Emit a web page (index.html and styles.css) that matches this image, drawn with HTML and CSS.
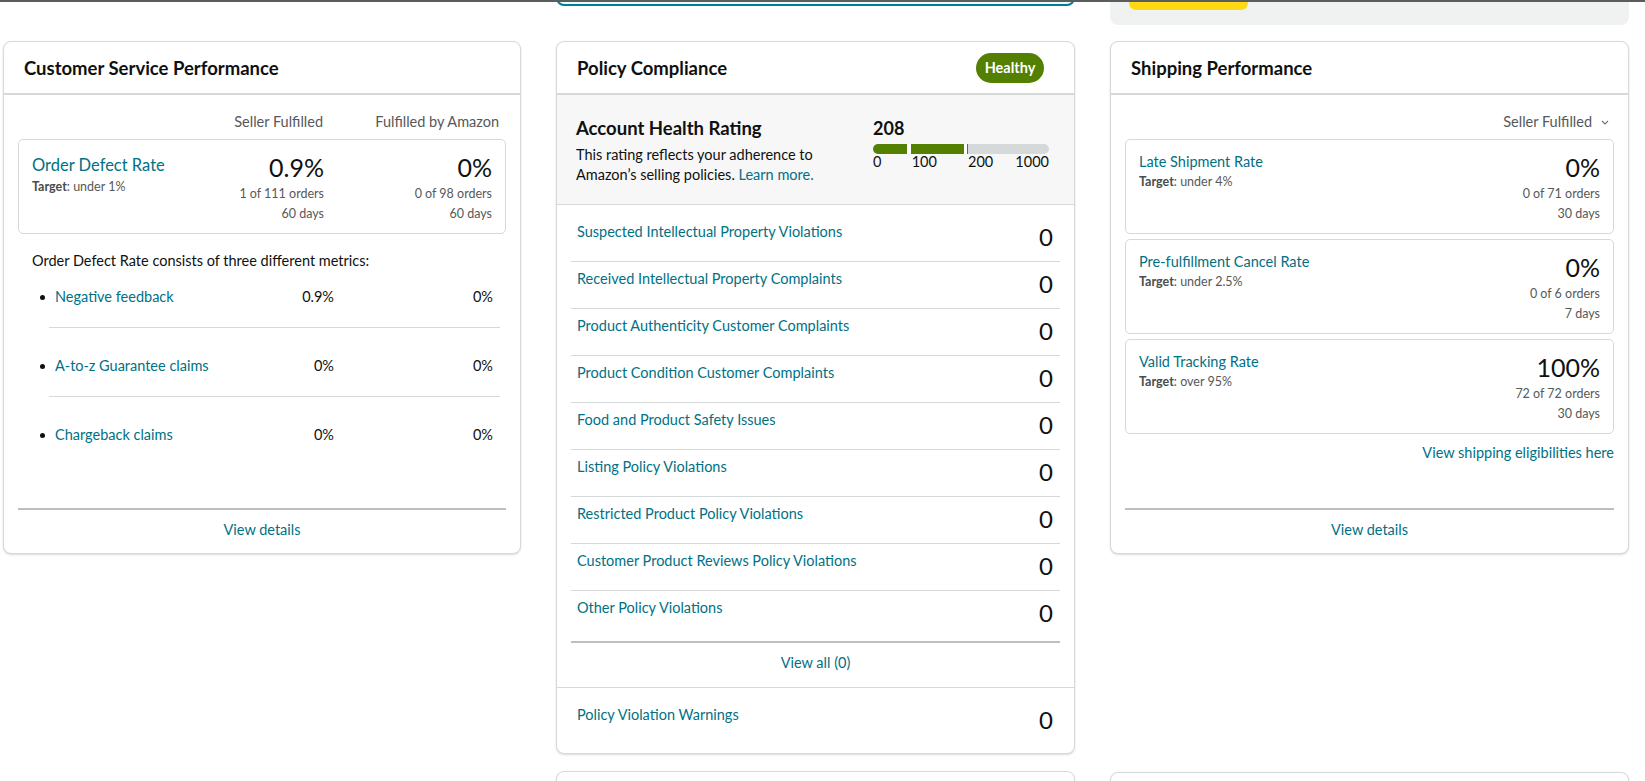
FILE: index.html
```html
<!DOCTYPE html>
<html lang="en">
<head>
<meta charset="utf-8">
<title>Account Health</title>
<link rel="stylesheet" href="styles.css">
</head>
<body>
<div class="strip">
  <div></div>
  <div class="teal-clip"><div class="teal-box"></div></div>
  <div class="gray-box"><div class="yellow-btn"></div></div>
</div>

<div class="grid">
  <!-- Customer Service Performance -->
  <section class="card">
    <div class="card-head"><h2 class="card-title">Customer Service Performance</h2></div>
    <div class="card-body">
      <div class="col-heads">
        <span class="col-head">Seller Fulfilled</span>
        <span class="col-head">Fulfilled by Amazon</span>
      </div>
      <div class="metric-box odr-box">
        <div class="mb-left">
          <a class="link mb-label big">Order Defect Rate</a>
          <div class="target"><b>Target</b>: under 1%</div>
        </div>
        <div class="mb-right">
          <div class="mb-value">0.9%</div>
          <div class="mb-sub first">1 of 111 orders</div>
          <div class="mb-sub">60 days</div>
        </div>
        <div class="mb-right">
          <div class="mb-value">0%</div>
          <div class="mb-sub first">0 of 98 orders</div>
          <div class="mb-sub">60 days</div>
        </div>
      </div>
      <p class="odr-desc">Order Defect Rate consists of three different metrics:</p>
      <div class="metrics">
        <div class="m-row"><span class="dot"></span><a class="link">Negative feedback</a><span class="m-val">0.9%</span><span class="m-val">0%</span></div>
        <div class="m-sep"></div>
        <div class="m-row"><span class="dot"></span><a class="link">A-to-z Guarantee claims</a><span class="m-val">0%</span><span class="m-val">0%</span></div>
        <div class="m-sep"></div>
        <div class="m-row"><span class="dot"></span><a class="link">Chargeback claims</a><span class="m-val">0%</span><span class="m-val">0%</span></div>
      </div>
      <div class="card-foot csp-foot"><a class="link">View details</a></div>
    </div>
  </section>

  <!-- Policy Compliance -->
  <section class="card">
    <div class="card-head"><h2 class="card-title">Policy Compliance</h2><span class="badge">Healthy</span></div>
    <div class="health">
      <div class="health-text">
        <div class="health-title">Account Health Rating</div>
        <div class="health-desc">This rating reflects your adherence to<br>Amazon’s selling policies. <a class="link">Learn more.</a></div>
      </div>
      <div class="score">
        <div class="score-num">208</div>
        <div class="bar">
          <span class="seg seg-a"></span>
          <span class="bar-gap g1"></span>
          <span class="seg seg-b"></span>
          <span class="bar-gap g2"></span>
          <span class="seg seg-mark"></span>
          <span class="seg seg-rest"></span>
        </div>
        <div class="bar-labels"><span>0</span><span>100</span><span>200</span><span>1000</span></div>
      </div>
    </div>
    <div class="pc-list">
      <div class="pc-row"><a class="link">Suspected Intellectual Property Violations</a><span class="pc-val">0</span></div>
      <div class="pc-row"><a class="link">Received Intellectual Property Complaints</a><span class="pc-val">0</span></div>
      <div class="pc-row"><a class="link">Product Authenticity Customer Complaints</a><span class="pc-val">0</span></div>
      <div class="pc-row"><a class="link">Product Condition Customer Complaints</a><span class="pc-val">0</span></div>
      <div class="pc-row"><a class="link">Food and Product Safety Issues</a><span class="pc-val">0</span></div>
      <div class="pc-row"><a class="link">Listing Policy Violations</a><span class="pc-val">0</span></div>
      <div class="pc-row"><a class="link">Restricted Product Policy Violations</a><span class="pc-val">0</span></div>
      <div class="pc-row"><a class="link">Customer Product Reviews Policy Violations</a><span class="pc-val">0</span></div>
      <div class="pc-row last"><a class="link">Other Policy Violations</a><span class="pc-val">0</span></div>
      <div class="pc-foot"><a class="link">View all (0)</a></div>
    </div>
    <div class="pc-warn">
      <div class="pc-row warn-row"><a class="link">Policy Violation Warnings</a><span class="pc-val">0</span></div>
    </div>
  </section>

  <!-- Shipping Performance -->
  <section class="card">
    <div class="card-head"><h2 class="card-title">Shipping Performance</h2></div>
    <div class="card-body">
      <div class="sel-row">
        <span class="col-head">Seller Fulfilled</span>
        <svg class="chev" width="8" height="5" viewBox="0 0 8 5"><path d="M1 1 L4 4 L7 1" fill="none" stroke="#6f7373" stroke-width="1.1"/></svg>
      </div>
      <div class="ship-boxes">
        <div class="metric-box ship-box">
          <div class="mb-left">
            <a class="link mb-label">Late Shipment Rate</a>
            <div class="target sm"><b>Target</b>: under 4%</div>
          </div>
          <div class="mb-right">
            <div class="mb-value">0%</div>
            <div class="mb-sub first">0 of 71 orders</div>
            <div class="mb-sub">30 days</div>
          </div>
        </div>
        <div class="metric-box ship-box">
          <div class="mb-left">
            <a class="link mb-label">Pre-fulfillment Cancel Rate</a>
            <div class="target sm"><b>Target</b>: under 2.5%</div>
          </div>
          <div class="mb-right">
            <div class="mb-value">0%</div>
            <div class="mb-sub first">0 of 6 orders</div>
            <div class="mb-sub">7 days</div>
          </div>
        </div>
        <div class="metric-box ship-box">
          <div class="mb-left">
            <a class="link mb-label">Valid Tracking Rate</a>
            <div class="target sm"><b>Target</b>: over 95%</div>
          </div>
          <div class="mb-right">
            <div class="mb-value">100%</div>
            <div class="mb-sub first">72 of 72 orders</div>
            <div class="mb-sub">30 days</div>
          </div>
        </div>
      </div>
      <div class="elig"><a class="link">View shipping eligibilities here</a></div>
      <div class="card-foot ship-foot"><a class="link">View details</a></div>
    </div>
  </section>

  <div></div>
  <section class="card stub"></section>
  <section class="card stub stub-right"></section>
</div>
</body>
</html>
```

FILE: styles.css
```css
* { box-sizing: border-box; }

body {
  margin: 0;
  font-family: Lato, "Liberation Sans", Arial, sans-serif;
  font-size: 14.5px;
  line-height: 20px;
  color: #0f1111;
  background: #fff;
  overflow: hidden;
}

.link { color: #007185; text-decoration: none; cursor: pointer; white-space: nowrap; }

/* top strip: bottoms of the cards above */
.strip {
  display: grid;
  grid-template-columns: 518px 519px 519px;
  column-gap: 35px;
  padding-left: 3px;
  height: 41px;
  border-top: 2px solid #5a5d5d;
  align-items: start;
}
.teal-clip { height: 4px; overflow: hidden; }
.teal-box {
  margin-top: -20px;
  height: 24px;
  border: 2px solid #007f8f;
  border-radius: 8px;
  background: #f1f8f9;
}
.gray-box {
  height: 23px;
  background: #f0f2f2;
  border-radius: 0 0 8px 8px;
}
.yellow-btn {
  margin-left: 19px;
  width: 119px;
  height: 8px;
  background: #ffd814;
  border-radius: 0 0 7px 7px;
}

/* grid of cards */
.grid {
  display: grid;
  grid-template-columns: 518px 519px 519px;
  column-gap: 35px;
  row-gap: 17px;
  padding-left: 3px;
  align-items: start;
}

.card {
  border: 1px solid #d5d9d9;
  border-radius: 8px;
  background: #fff;
  box-shadow: 0 1px 2px rgba(15, 17, 17, 0.15);
}
.card.stub { height: 60px; }
.card.stub-right { margin-top: 1px; }

.card-head {
  height: 53px;
  display: flex;
  align-items: center;
  justify-content: space-between;
  padding: 1px 30px 0 20px;
  border-bottom: 2px solid #d5d9d9;
}
.card-title {
  margin: 0;
  font-size: 18.5px;
  line-height: 24px;
  font-weight: 700;
}
.badge {
  width: 68px;
  height: 30px;
  border-radius: 15px;
  background: #538000;
  color: #fff;
  font-weight: 700;
  font-size: 14.5px;
  display: flex;
  align-items: center;
  justify-content: center;
}

.card-body { padding: 0 14px; }

.col-heads {
  display: flex;
  justify-content: flex-end;
  padding-right: 7px;
  margin-top: 17px;
}
.col-head {
  width: 176px;
  text-align: right;
  color: #565959;
  line-height: 20px;
}
.sel-row .col-head { width: auto; }

.metric-box {
  border: 1px solid #d5d9d9;
  border-radius: 5px;
  display: grid;
  padding: 12px 13px 9px;
}
.odr-box {
  margin-top: 7px;
  grid-template-columns: minmax(0, 1fr) 168px 168px;
}
.ship-box { grid-template-columns: minmax(0, 1fr) auto; }

.mb-label { display: block; line-height: 20px; }
.mb-label.big { font-size: 16.5px; line-height: 22px; margin-top: 2px; }

.target {
  font-size: 12.5px;
  line-height: 16px;
  color: #565959;
  margin-top: 3px;
}
.target.sm { margin-top: 2px; }
.target b { font-weight: 700; color: #494d4d; }

.mb-right { text-align: right; }
.mb-value { font-size: 25px; line-height: 30px; font-variant-numeric: tabular-nums; }
.mb-sub { font-size: 12.5px; line-height: 20px; color: #565959; }
.mb-sub.first { margin-top: 2px; }

.odr-desc {
  margin: 17px 0 0 14px;
  line-height: 20px;
}

.metrics {
  margin-top: 16px;
  padding: 0 6px 0 22px;
}
.m-row {
  display: grid;
  grid-template-columns: 15px minmax(0, 1fr) 120px 159px;
  align-items: center;
  padding-right: 7px;
  line-height: 20px;
}
.dot {
  width: 5px;
  height: 5px;
  border-radius: 50%;
  background: #0f1111;
}
.m-val { text-align: right; }
.m-sep {
  height: 1px;
  background: #d5d9d9;
  margin: 20px 0 28px 9px;
}

.card-foot {
  border-top: 2px solid #bbbfbf;
  padding: 10px 0 13px;
  text-align: center;
}
.csp-foot { margin-top: 63px; }

/* shipping */
.sel-row {
  display: flex;
  justify-content: flex-end;
  align-items: center;
  gap: 9px;
  margin-top: 17px;
  padding-right: 5px;
}
.chev { display: block; }
.ship-boxes {
  display: flex;
  flex-direction: column;
  gap: 5px;
  margin-top: 7px;
}
.elig { text-align: right; margin-top: 9px; }
.ship-foot { margin-top: 45px; }

/* policy compliance */
.health {
  display: flex;
  justify-content: space-between;
  background: #f7f7f7;
  border-bottom: 1px solid #d5d9d9;
  padding: 22px 25px 19px 19px;
}
.health-title { font-size: 18.5px; line-height: 22px; font-weight: 700; }
.health-desc { margin-top: 6px; line-height: 20px; white-space: nowrap; }

.score { width: 176px; }
.score-num { font-size: 18px; line-height: 22px; font-weight: 700; }
.bar {
  display: flex;
  height: 10px;
  margin-top: 5px;
  border-radius: 5px;
  overflow: hidden;
  background: #fff;
}
.seg { display: block; height: 10px; }
.seg-a { width: 34px; background: #538000; }
.bar-gap { display: block; background: #fff; }
.g1 { width: 4px; }
.g2 { width: 2.5px; }
.seg-b { width: 53px; background: #538000; }
.seg-mark { width: 1.5px; background: #538000; }
.seg-rest { flex: 1; background: #d5d9d9; }
.bar-labels {
  display: grid;
  grid-template-columns: 38.7px 56.3px 1fr auto;
  line-height: 16px;
}

.pc-list {
  margin: 0 14px;
  padding-top: 10px;
}
.pc-row {
  display: flex;
  justify-content: space-between;
  align-items: flex-start;
  padding: 7px 7px 9px 6px;
  border-bottom: 1px solid #d5d9d9;
}
.pc-row.last { border-bottom: 0; }
.pc-val { font-size: 24px; line-height: 30px; }
.pc-foot {
  margin-top: 4px;
  border-top: 2px solid #bbbfbf;
  padding: 10px 0 14px;
  text-align: center;
}
.pc-warn { border-top: 1px solid #d5d9d9; }
.warn-row {
  margin: 0 14px;
  border-bottom: 0;
  padding: 17px 7px 18px 6px;
}
```
